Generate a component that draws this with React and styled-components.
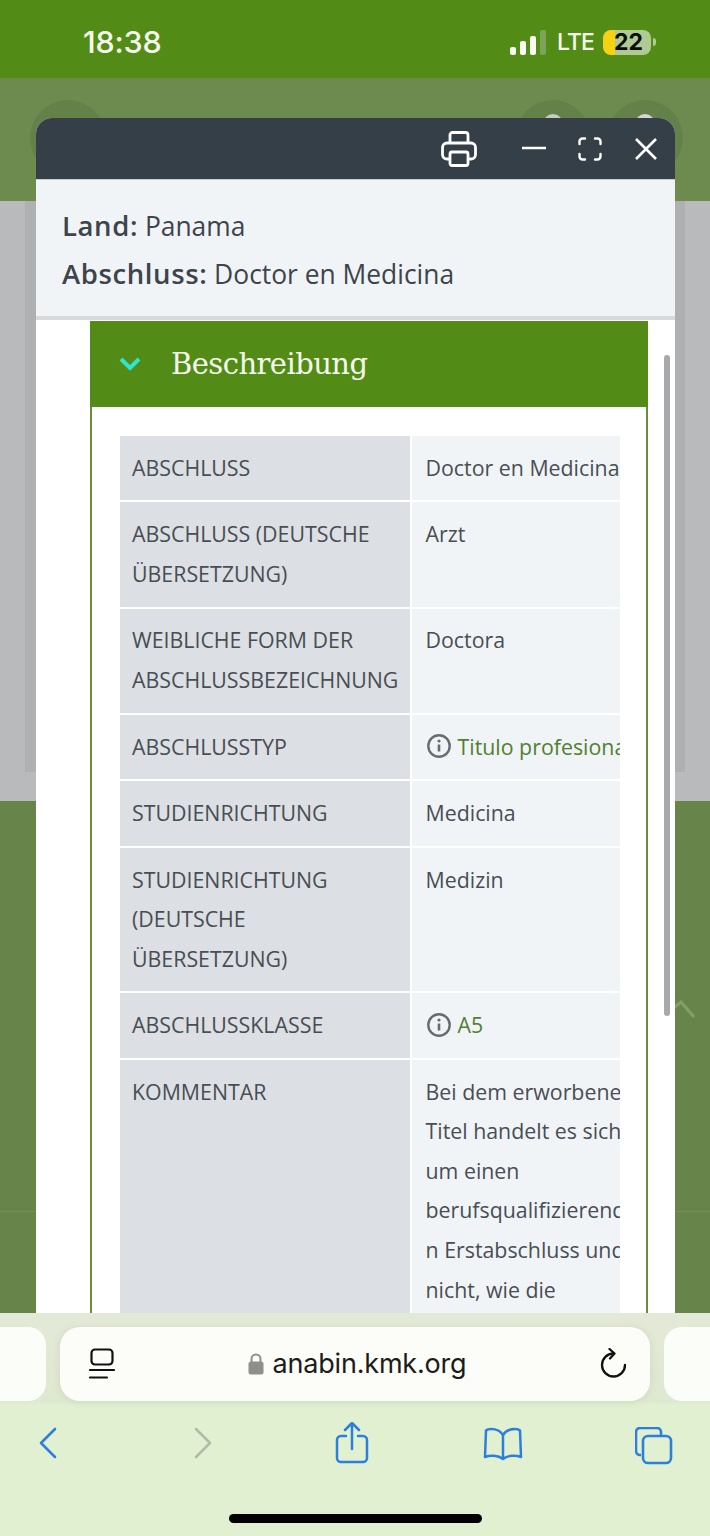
import React from "react";
import styled, { createGlobalStyle } from "styled-components";

const Global = createGlobalStyle`
  html, body { margin: 0; padding: 0; background: #e1f0d0; }
  * { box-sizing: border-box; }
`;

const Screen = styled.div`
  width: 710px; height: 1536px; overflow: hidden;
  display: flex; flex-direction: column;
  font-family: "Open Sans", "Noto Sans", sans-serif;
`;

/* status bar */
const StatusBar = styled.header`
  height: 78px; flex: none; background: #528c17;
  display: flex; align-items: flex-start; justify-content: space-between;
  padding: 24px 54px 0 83px;
`;
const Clock = styled.span`
  font: 500 30.5px/36px Inter, sans-serif; color: #f6f9f0; letter-spacing: -0.2px;
`;
const StatusRight = styled.div`
  display: flex; align-items: center; height: 36px;
`;
const Signal = styled.div`
  display: flex; align-items: flex-end; gap: 4px; height: 25px; margin-right: 11px;
`;
const Bar = styled.i`
  display: block; width: 6px; height: ${p => p.$h}px; border-radius: 2px;
  background: ${p => (p.$off ? "#7da35a" : "#f8faf3")};
`;
const Lte = styled.span`
  font: 500 23px/26px Inter, sans-serif; color: #f4f8ec; width: 46px; letter-spacing: -0.9px;
`;
const Battery = styled.div`
  width: 48px; height: 25px; border-radius: 8px;
  background: linear-gradient(90deg, #f7d210 0 25%, #aecb94 25% 100%);
  font: 700 23px/25px Inter, sans-serif; color: #0c0c0c; text-align: center;
  padding-left: 3px;
`;
const Nub = styled.i`
  display: block; width: 3px; height: 8px; margin-left: 2px; border-radius: 0 3px 3px 0; background: #aecb94;
`;

/* page behind the window */
const Backdrop = styled.main`
  flex: 1; position: relative; overflow: hidden; display: flex; flex-direction: column;
`;
const TopBand = styled.div`
  height: 123px; background: #6d8a4f; flex: none;
`;
const GreyBand = styled.div`
  height: 600px; flex: none; background: #b8babc; padding: 0 25px;
`;
const GreyCard = styled.div`
  height: 571px; background: #aeb0b2;
`;
const GreenBand = styled.div`
  flex: 1; background: #67854a; position: relative;
`;
const Rule = styled.div`
  position: absolute; left: 0; right: 0; top: 410px; height: 1px; background: #739058;
`;
const RoundButton = styled.div`
  position: absolute; top: 22px; left: ${p => p.$x}px; width: 76px; height: 76px; border-radius: 50%;
  background: #64814a;
`;
const Knob = styled.div`
  position: absolute; top: 14px; left: 28px; width: 20px; height: 20px; border-radius: 50%;
  background: ${p => p.$c};
`;
const Caret = styled.svg`
  position: absolute; left: 668px; top: 921px;
`;

/* window */
const Modal = styled.section`
  position: absolute; left: 36px; top: 40px; bottom: 0; width: 639px;
  background: #fff; border-radius: 16px 16px 0 0; overflow: hidden;
  display: flex; flex-direction: column;
`;
const ModalBar = styled.div`
  height: 61px; flex: none; background: #353f47;
  display: flex; align-items: center; padding-left: 405px;
`;
const BarIcon = styled.svg`
  display: block; flex: none; margin-left: ${p => p.$gap || 0}px;
`;
const Info = styled.div`
  flex: none; height: 141px; background: #f1f4f7;
  border-top: 1px solid #c7ccd0; border-bottom: 4px solid #d8dadb;
  padding: 22px 26px 0;
  font-size: 26.4px; line-height: 47px; color: #3d444b;
`;
const InfoLine = styled.div`
  white-space: nowrap;
  b { font-weight: 600; font-size: 27.5px; letter-spacing: 0.6px; }
`;
const Body = styled.div`
  flex: 1; min-height: 0; position: relative; padding: 1px 0 0 54px;
`;
const Scrollbar = styled.div`
  position: absolute; left: 628px; top: 35px; width: 6px; height: 661px;
  border-radius: 3px; background: #a8a9aa;
`;
const Panel = styled.article`
  width: 558px; height: 100%;
  border-left: 2px solid #6b8c3a; border-right: 2px solid #6b8c3a;
`;
const PanelHead = styled.div`
  height: 86px; margin: 0 -2px; background: #528c17;
  display: flex; align-items: center; padding-left: 29px;
`;
const PanelTitle = styled.h2`
  margin: 0 0 0 30px; font: 400 29px/36px "DejaVu Serif", serif; color: #f7fbef; letter-spacing: -0.55px;
`;
const PanelBody = styled.div`
  padding: 29px 26px 0 28px;
`;
const TableClip = styled.div`
  overflow: hidden; width: 500px;
`;
const Table = styled.div`
  display: grid; grid-template-columns: 290px 260px; gap: 2px; width: 552px;
  font-size: 21.35px; line-height: 39.6px; color: #484e54;
`;
const Label = styled.div`
  background: #dcdfe3; padding: 11.9px 8px 13px 12px;
`;
const Value = styled.div`
  background: #f1f4f7; padding: 11.9px 8px 13px 13.5px;
`;
const ValueLine = styled.div`
  white-space: nowrap;
`;
const LinkLine = styled.div`
  display: flex; align-items: center; white-space: nowrap; color: #527f30;
`;
const InfoIcon = styled.svg`
  flex: none; margin: 0 7px 0 1px;
`;

/* browser chrome */
const Chrome = styled.footer`
  height: 223px; flex: none;
  background: linear-gradient(#e3e9d7 0, #dfe8d0 88px, #e1f0d0 92px);
  display: flex; flex-direction: column;
`;
const TabRow = styled.div`
  display: flex; gap: 14px; padding-top: 14px; height: 88px; flex: none;
`;
const SideCard = styled.div`
  width: 46px; height: 74px; background: #fbfdf8;
  border-radius: ${p => (p.$left ? "0 18px 18px 0" : "18px 0 0 18px")};
`;
const AddressBar = styled.div`
  width: 590px; height: 74px; background: #fcfdf9; border-radius: 20px;
  box-shadow: 0 1px 8px rgba(90, 110, 70, 0.12);
  display: flex; align-items: center; padding: 0 23px 0 29px;
`;
const Url = styled.div`
  flex: 1; display: flex; align-items: center; justify-content: center; gap: 9px;
  font: 400 27px/36px Inter, sans-serif; color: #1b1c1a; letter-spacing: -0.2px;
`;
const Toolbar = styled.nav`
  display: grid; grid-template-columns: 155px 149px 151px 151px 40px;
  padding: 26px 0 0 28px; height: 81px; flex: none;
`;
const ToolSlot = styled.div`
  width: 40px; display: flex; justify-content: center;
`;
const HomeBar = styled.div`
  width: 253px; height: 9px; border-radius: 5px; background: #000; margin: 32px 0 0 229px;
`;

const rows = [
  { label: ["ABSCHLUSS"], value: ["Doctor en Medicina"] },
  { label: ["ABSCHLUSS (DEUTSCHE", "ÜBERSETZUNG)"], value: ["Arzt"] },
  { label: ["WEIBLICHE FORM DER", "ABSCHLUSSBEZEICHNUNG"], value: ["Doctora"] },
  { label: ["ABSCHLUSSTYP"], link: "Titulo profesional" },
  { label: ["STUDIENRICHTUNG"], value: ["Medicina"] },
  { label: ["STUDIENRICHTUNG", "(DEUTSCHE", "ÜBERSETZUNG)"], value: ["Medizin"] },
  { label: ["ABSCHLUSSKLASSE"], link: "A5" },
  {
    label: ["KOMMENTAR"],
    value: ["Bei dem erworbenen", "Titel handelt es sich", "um einen", "berufsqualifizierende", "n Erstabschluss und", "nicht, wie die", "Bezeichnung"],
  },
];

const Circle = () => (
  <InfoIcon width="24" height="24" viewBox="0 0 24 24" fill="none" stroke="#686c70" strokeWidth="2.4">
    <circle cx="12" cy="12" r="10.7" />
    <path d="M12 10.500v7" strokeWidth="2.6" />
    <circle cx="12" cy="7" r="1.6" fill="#686c70" stroke="none" />
  </InfoIcon>
);

export default function App() {
  return (
    <Screen>
      <Global />
      <StatusBar>
        <Clock>18:38</Clock>
        <StatusRight>
          <Signal>
            <Bar $h={8} /><Bar $h={14} /><Bar $h={19} /><Bar $h={25} $off />
          </Signal>
          <Lte>LTE</Lte>
          <Battery>22</Battery>
          <Nub />
        </StatusRight>
      </StatusBar>

      <Backdrop>
        <TopBand />
        <GreyBand><GreyCard /></GreyBand>
        <GreenBand><Rule /></GreenBand>
        <RoundButton $x={30} />
        <RoundButton $x={515}><Knob $c="#c6cfbb" /></RoundButton>
        <RoundButton $x={607}><Knob $c="#d5d6d3" /></RoundButton>
        <Caret width="30" height="22" viewBox="0 0 30 22" fill="none" stroke="#83a06a" strokeWidth="3">
          <path d="M3 11 L13 3 L26 18" />
        </Caret>

        <Modal>
          <ModalBar>
            <BarIcon width="36" height="36" viewBox="0 0 36 36" fill="none" stroke="#fff" strokeWidth="2.8" strokeLinejoin="round">
              <path d="M9 12V4a2.500 2.500 0 0 1 2.500-2.500h13A2.500 2.500 0 0 1 27 4v8" />
              <path d="M9 28H6a4.500 4.500 0 0 1-4.500-4.500v-7A4.500 4.500 0 0 1 6 12h24a4.500 4.500 0 0 1 4.500 4.500v7A4.500 4.500 0 0 1 30 28h-3" />
              <rect x="9" y="21" width="18" height="13.500" rx="2" />
            </BarIcon>
            <BarIcon $gap={45} width="24" height="24" viewBox="0 0 24 24" fill="none" stroke="#fff" strokeWidth="2.6">
              <path d="M0 11h24" />
            </BarIcon>
            <BarIcon $gap={32} width="24" height="24" viewBox="0 0 24 24" fill="none" stroke="#fff" strokeWidth="2.4" strokeLinecap="round">
              <path d="M1.500 7V4.500a3 3 0 0 1 3-3H7M17 1.500h2.500a3 3 0 0 1 3 3V7M22.500 17v2.500a3 3 0 0 1-3 3H17M7 22.500H4.500a3 3 0 0 1-3-3V17" />
            </BarIcon>
            <BarIcon $gap={33} width="22" height="22" viewBox="0 0 22 22" fill="none" stroke="#fff" strokeWidth="2.6">
              <path d="M1 1l20 20M21 1L1 21" />
            </BarIcon>
          </ModalBar>
          <Info>
            <InfoLine><b>Land:</b> Panama</InfoLine>
            <InfoLine><b>Abschluss:</b> Doctor en Medicina</InfoLine>
          </Info>
          <Body>
            <Panel>
              <PanelHead>
                <svg width="22" height="14" viewBox="0 0 22 14" fill="none" stroke="#2de6cf" strokeWidth="4">
                  <path d="M2 2l9 9 9-9" />
                </svg>
                <PanelTitle>Beschreibung</PanelTitle>
              </PanelHead>
              <PanelBody>
                <TableClip>
                  <Table>
                    {rows.map((r, i) => (
                      <React.Fragment key={i}>
                        <Label>{r.label.map(l => <div key={l}>{l}</div>)}</Label>
                        <Value>
                          {r.link
                            ? <LinkLine><Circle />{r.link}</LinkLine>
                            : r.value.map(v => <ValueLine key={v}>{v}</ValueLine>)}
                        </Value>
                      </React.Fragment>
                    ))}
                  </Table>
                </TableClip>
              </PanelBody>
            </Panel>
            <Scrollbar />
          </Body>
        </Modal>
      </Backdrop>

      <Chrome>
        <TabRow>
          <SideCard $left />
          <AddressBar>
            <svg width="26" height="32" viewBox="0 0 26 32" fill="none" stroke="#111" strokeWidth="2.2" strokeLinecap="round">
              <rect x="2.500" y="1.500" width="21" height="15" rx="3.500" />
              <path d="M1 22h24M1 29.500h17" />
            </svg>
            <Url>
              <svg width="16" height="22" viewBox="0 0 16 22">
                <path d="M3.500 9V6a4.500 4.500 0 0 1 9 0v3" fill="none" stroke="#8e8f8c" strokeWidth="2" />
                <rect x="0.500" y="8.500" width="15" height="13" rx="2.500" fill="#8e8f8c" />
              </svg>
              anabin.kmk.org
            </Url>
            <svg width="28" height="32" viewBox="0 0 28 32" fill="none" stroke="#111" strokeWidth="2.3" strokeLinecap="round" strokeLinejoin="round">
              <path d="M14.500 5.500A11.500 11.500 0 1 0 26 17" />
              <path d="M10.500 1l5 4.500-4.500 5" />
            </svg>
          </AddressBar>
          <SideCard />
        </TabRow>
        <Toolbar>
          <ToolSlot>
            <svg width="20" height="32" viewBox="0 0 20 32" fill="none" stroke="#2b80dc" strokeWidth="2.6" strokeLinecap="round" strokeLinejoin="round">
              <path d="M17 2L3 16l14 14" />
            </svg>
          </ToolSlot>
          <ToolSlot>
            <svg width="20" height="32" viewBox="0 0 20 32" fill="none" stroke="#b2bbaa" strokeWidth="2.6" strokeLinecap="round" strokeLinejoin="round">
              <path d="M3 2l14 14L3 30" />
            </svg>
          </ToolSlot>
          <ToolSlot>
            <svg width="34" height="42" viewBox="0 0 34 42" fill="none" stroke="#2b80dc" strokeWidth="2.5" strokeLinecap="round" strokeLinejoin="round" style={{ marginTop: -5 }}>
              <path d="M17 27V2M10 8l7-7 7 7" />
              <path d="M11 14H6a4 4 0 0 0-4 4v18a4 4 0 0 0 4 4h22a4 4 0 0 0 4-4V18a4 4 0 0 0-4-4h-5" />
            </svg>
          </ToolSlot>
          <ToolSlot>
            <svg width="40" height="34" viewBox="0 0 40 34" fill="none" stroke="#2b80dc" strokeWidth="2.5" strokeLinejoin="round">
              <path d="M20 8C17 3 12 2 8 2c-2 0-4 .5-5 1.500L2 30c5-2 13-2 18 2 5-4 13-4 18-2L37 3.500C36 2.500 34 2 32 2c-4 0-9 1-12 6zM20 8v24" />
            </svg>
          </ToolSlot>
          <ToolSlot>
            <svg width="38" height="38" viewBox="0 0 38 38" fill="none" stroke="#2b80dc" strokeWidth="2.6" strokeLinejoin="round">
              <path d="M6 28H5a4 4 0 0 1-4-4V5a4 4 0 0 1 4-4h17a4 4 0 0 1 4 4v4" />
              <rect x="8" y="9" width="28" height="27" rx="5" />
            </svg>
          </ToolSlot>
        </Toolbar>
        <HomeBar />
      </Chrome>
    </Screen>
  );
}
